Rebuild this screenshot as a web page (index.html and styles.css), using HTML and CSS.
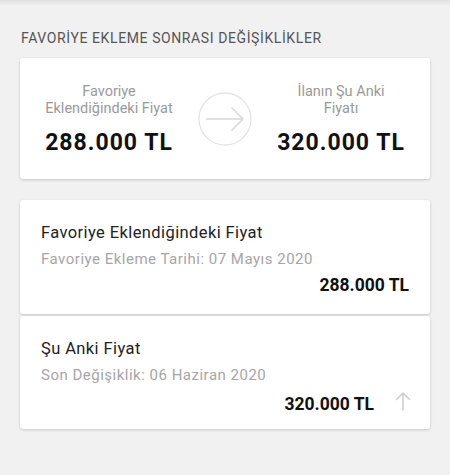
FILE: index.html
```html
<!DOCTYPE html>
<html lang="tr">
<head>
<meta charset="utf-8">
<link rel="stylesheet" href="styles.css">
</head>
<body>
<div class="topshade"></div>
<main class="page">
  <h2 class="section-title">FAVORİYE EKLEME SONRASI DEĞİŞİKLİKLER</h2>
  <section class="card compare">
    <div class="col">
      <div class="label">Favoriye<br>Eklendiğindeki Fiyat</div>
      <div class="big-price">288.000 TL</div>
    </div>
    <div class="circle">
      <svg width="54" height="54" viewBox="0 0 54 54">
        <circle cx="27" cy="27" r="26" fill="none" stroke="#e4e4e4" stroke-width="1.3"/>
        <path d="M8.5 27H45M34 16L45 27L34 38" fill="none" stroke="#d8d8d8" stroke-width="1.5" stroke-linecap="round" stroke-linejoin="round"/>
      </svg>
    </div>
    <div class="col">
      <div class="label">İlanın Şu Anki<br>Fiyatı</div>
      <div class="big-price">320.000 TL</div>
    </div>
  </section>
  <div class="list">
    <section class="card row">
      <div class="row-title">Favoriye Eklendiğindeki Fiyat</div>
      <div class="row-sub">Favoriye Ekleme Tarihi: 07 Mayıs 2020</div>
      <div class="row-price"><span class="price">288.000 TL</span></div>
    </section>
    <section class="card row">
      <div class="row-title">Şu Anki Fiyat</div>
      <div class="row-sub">Son Değişiklik: 06 Haziran 2020</div>
      <div class="row-price with-icon"><span class="price">320.000 TL</span>
        <svg class="up" width="16" height="20" viewBox="0 0 16 20">
          <path d="M8 19V2M1.5 8.5L8 2L14.5 8.5" fill="none" stroke="#cfcfcf" stroke-width="1.6" stroke-linecap="round" stroke-linejoin="round"/>
        </svg>
      </div>
    </section>
  </div>
</main>
</body>
</html>
```
FILE: styles.css
```css
* { box-sizing: border-box; }
html, body { margin: 0; padding: 0; }
body {
  background: #f1f1f1;
  font-family: Roboto, "Liberation Sans", Arial, sans-serif;
  width: 450px;
  height: 475px;
  overflow: hidden;
  position: relative;
}
.topshade {
  position: absolute;
  left: 0; right: 0; top: 0;
  height: 6px;
  background: linear-gradient(to bottom, rgba(0,0,0,0.07), rgba(0,0,0,0));
}
.page {
  padding: 30px 20px 0;
}
.section-title {
  margin: 0 0 12px;
  font-size: 14px;
  line-height: 16px;
  font-weight: 400;
  color: #555;
  letter-spacing: 0.6px;
  padding-left: 1px;
}
.card {
  background: #fff;
  border-radius: 3px;
  box-shadow: 0 1px 3px rgba(0,0,0,0.18);
}
.compare {
  display: grid;
  grid-template-columns: 1fr 54px 1fr;
  align-items: start;
  height: 121px;
  padding: 25px 0 0;
}
.col {
  text-align: center;
}
.label {
  font-size: 14.5px;
  line-height: 17px;
  color: #9a9a9a;
}
.big-price {
  margin-top: 13px;
  font-size: 23px;
  line-height: 26px;
  font-weight: 700;
  letter-spacing: 1px;
  color: #111;
}
.circle {
  display: flex;
  justify-content: center;
  align-self: center;
  margin-top: -25px;
}
.circle svg { display: block; }
.list {
  margin-top: 21px;
  display: flex;
  flex-direction: column;
  gap: 2px;
}
.row {
  height: 114px;
  padding: 23px 21px 0 20px;
}
.row + .row { height: 113px; }
.row-title {
  font-size: 16.5px;
  line-height: 20px;
  letter-spacing: 0.4px;
  color: #222;
  padding-left: 1px;
}
.row-sub {
  margin-top: 7px;
  font-size: 15px;
  line-height: 19px;
  letter-spacing: 0.5px;
  color: #a6a6a6;
  padding-left: 1px;
}
.row-price {
  margin-top: 6px;
  display: flex;
  justify-content: flex-end;
  align-items: center;
  gap: 21px;
}
.row-price.with-icon { margin-right: -2px; }
.price {
  font-size: 17.5px;
  line-height: 20px;
  font-weight: 700;
  color: #111;
}
.up { display: block; margin-bottom: 6px; }
```
